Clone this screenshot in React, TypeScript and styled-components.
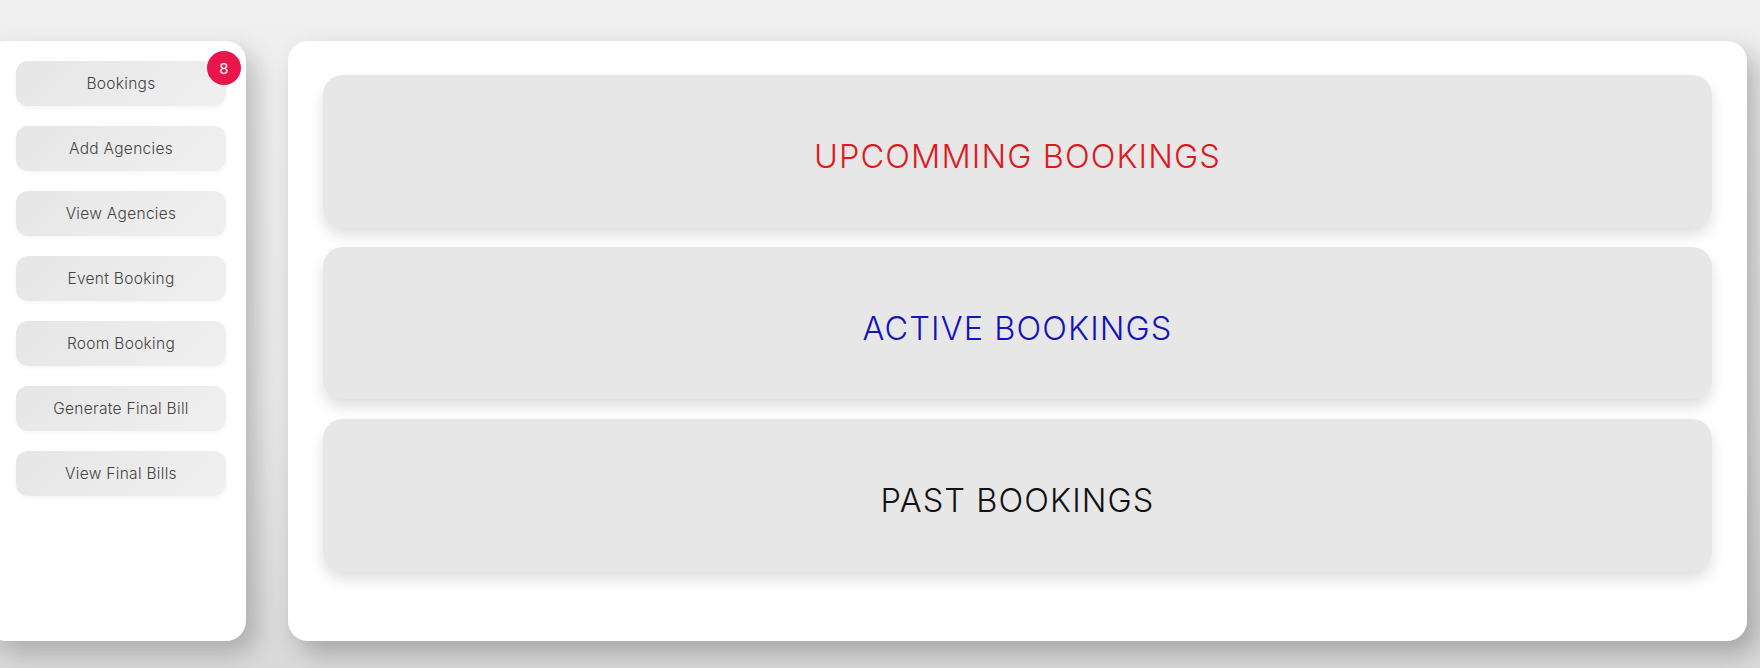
import { FC } from 'react';
import styled, { createGlobalStyle } from 'styled-components';

const FONT = "Inter, 'Noto Sans', 'Open Sans', sans-serif";

const GlobalStyle = createGlobalStyle`
  html, body {
    margin: 0;
    padding: 0;
    background: #ececec;
    font-family: ${FONT};
    overflow: hidden;
  }
`;

const StyledPage = styled.div`
  display: flex;
  align-items: flex-start;
  gap: 42px;
  width: 1760px;
  height: 668px;
  padding-top: 41px;
  box-sizing: border-box;
  background: linear-gradient(#f0f0f0 0%, #e9e9e9 60%, #dadada 100%);
  overflow: hidden;
`;

const StyledSidebar = styled.nav`
  display: flex;
  flex-direction: column;
  gap: 20px;
  flex: 0 0 260px;
  height: 600px;
  margin-left: -14px;
  padding: 20px 20px 0 30px;
  box-sizing: border-box;
  background: #ffffff;
  border-radius: 20px;
  box-shadow: 10px 12px 26px rgba(0, 0, 0, 0.22);
`;

const StyledNavButton = styled.button`
  position: relative;
  width: 210px;
  height: 45px;
  border: none;
  border-radius: 12px;
  background: linear-gradient(135deg, #e6e6e6 0%, #f0f0f0 100%);
  box-shadow: 0 2px 4px rgba(0, 0, 0, 0.04), 0 -2px 4px rgba(255, 255, 255, 0.9);
  font-family: ${FONT};
  font-size: 15.5px;
  font-weight: 300;
  letter-spacing: 0.3px;
  color: #444;
  cursor: pointer;
`;

const StyledBadge = styled.span`
  position: absolute;
  top: -10px;
  right: -15px;
  width: 34px;
  height: 34px;
  border-radius: 50%;
  background: #e8164a;
  color: #ffffff;
  display: flex;
  align-items: center;
  justify-content: center;
  font-size: 15px;
  font-weight: 400;
  letter-spacing: 0;
`;

const StyledMain = styled.main`
  display: flex;
  flex-direction: column;
  gap: 20px;
  width: 1459px;
  height: 600px;
  padding: 34px 35px 0 35px;
  box-sizing: border-box;
  background: #ffffff;
  border-radius: 20px;
  box-shadow: 10px 12px 26px rgba(0, 0, 0, 0.25);
`;

const StyledBookingCard = styled.div<{ color: string }>`
  display: flex;
  align-items: center;
  justify-content: center;
  height: 152px;
  padding-top: 10px;
  box-sizing: border-box;
  background: #e7e7e7;
  border-radius: 20px;
  box-shadow: 0 8px 14px rgba(0, 0, 0, 0.13), 0 -3px 6px rgba(255, 255, 255, 0.9);
  font-family: ${FONT};
  font-size: 32.5px;
  font-weight: 300;
  letter-spacing: 1.1px;
  color: ${({ color }) => color};
  cursor: pointer;
`;

const navItems = [
  'Bookings',
  'Add Agencies',
  'View Agencies',
  'Event Booking',
  'Room Booking',
  'Generate Final Bill',
  'View Final Bills',
];

const bookingCards = [
  { title: 'UPCOMMING BOOKINGS', color: '#dc1a1f' },
  { title: 'ACTIVE BOOKINGS', color: '#1414b8' },
  { title: 'PAST BOOKINGS', color: '#111111' },
];

const App: FC = () => {
  return (
    <>
      <GlobalStyle />
      <StyledPage>
        <StyledSidebar>
          {navItems.map((item, index) => (
            <StyledNavButton key={item}>
              {item}
              {index === 0 && <StyledBadge>8</StyledBadge>}
            </StyledNavButton>
          ))}
        </StyledSidebar>

        <StyledMain>
          {bookingCards.map(({ title, color }) => (
            <StyledBookingCard key={title} color={color}>
              {title}
            </StyledBookingCard>
          ))}
        </StyledMain>
      </StyledPage>
    </>
  );
};

export default App;
